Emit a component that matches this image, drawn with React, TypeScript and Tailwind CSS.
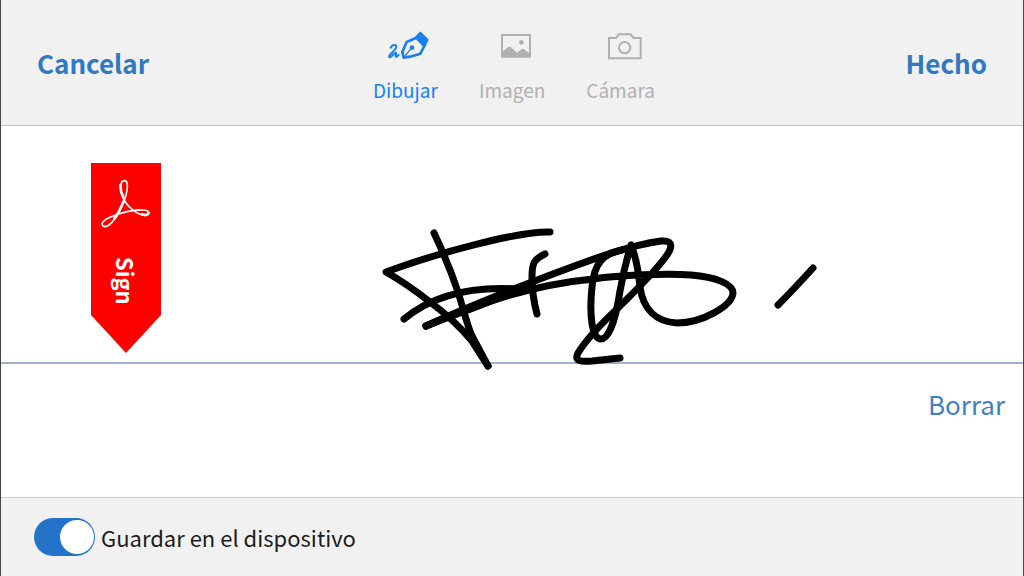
import { useState } from "react";
import clsx from "clsx";

function PenIcon() {
  return (
    <svg viewBox="84 30 126 90" className="h-[30px] w-[42px]" fill="none" stroke="currentColor" strokeLinejoin="round" strokeLinecap="round">
      <path strokeWidth="8" d="M131 110 L127 93 L140 63 L169 50 L193 75 L181 98 L150 107 Z" />
      <path fill="currentColor" strokeWidth="4" d="M168 47 L181 34 L204 56 L194 77 Z" />
      <path strokeWidth="4" d="M131 110 L153 83" />
      <circle cx="156" cy="80" r="7" fill="currentColor" stroke="none" />
      <path strokeWidth="6" d="M92 80 C98 69 112 69 108 81 C104 92 87 98 87 108 C93 112 103 94 108 95 C111 97 103 109 110 107 L116 102" />
    </svg>
  );
}

function ImageIcon() {
  return (
    <svg viewBox="420 36 96 84" className="h-[28px] w-[32px]" fill="currentColor">
      <path fillRule="evenodd" d="M423 42 H513 V113 H423 Z M429 48 V94 L446 80 Q449 78 452 81 L471 98 L486 87 Q489 85 492 88 L507 99 V48 Z" />
      <circle cx="484" cy="67" r="7" />
    </svg>
  );
}

function CameraIcon() {
  return (
    <svg viewBox="744 33 108 87" className="h-[29px] w-[36px]" fill="none" stroke="currentColor" strokeWidth="6">
      <path d="M750 51 H771 L780 40 H815 L824 51 H845 V112 H750 Z" />
      <circle cx="797" cy="80" r="17" />
    </svg>
  );
}

function AcrobatMark() {
  return (
    <svg viewBox="60 85 156 150" className="h-[50px] w-[52px]" fill="none" stroke="white" strokeLinejoin="round">
      <path
        strokeWidth="5"
        d="M133 90 C120 90 118 116 130 143 C143 170 174 194 195 194 C210 193 210 178 190 178 C164 176 120 186 90 200 C70 209 62 218 69 226 C84 235 108 205 122 175 C135 147 143 120 142 105 C142 96 139 90 133 90 Z"
      />
      <path strokeWidth="8" strokeLinecap="round" d="M103 204 C114 190 122 174 130 153 M121 104 C121 116 124 128 130 140 M186 191 C196 195 205 192 206 186" />
    </svg>
  );
}

function Signature() {
  return (
    <svg
      viewBox="380 220 440 150"
      role="img"
      aria-label="Firma"
      className="h-[150px] w-[440px] shrink-0"
      fill="none"
      stroke="black"
      strokeWidth="7"
      strokeLinecap="round"
      strokeLinejoin="round"
    >
      <path d="M434 233 C444 254 452 274 458 292 C464 311 467 325 472 336 L488 366" />
      <path d="M550 232 C520 231 440 252 386 272 C402 281 416 291 430 302 C445 313 461 328 472 341 L488 366" />
      <path d="M404 319 C432 296 470 286 517 289 C500 300 470 308 426 326" />
      <path d="M426 326 C465 308 500 294 545 277 C590 260 630 245 661 241 C674 240 673 248 664 259 C652 275 635 291 617 309 C601 324 586 340 578 353 C574 361 580 362 592 361 L620 358" />
      <path d="M426 326 C480 302 540 284 593 279 C620 275 667 273 691 275 C716 277 733 284 733 293 C732 306 702 323 677 323 C656 322 643 309 640 287 C638 267 634 252 631 245 C627 258 623 274 620 291 C616 318 609 339 601 339 C592 339 589 315 592 287 C594 264 603 253 622 250" />
      <path d="M545 254 C534 259 532 263 532 277 C532 293 534 303 537 314" />
      <path d="M813 268 C803 279 791 292 778 305" />
    </svg>
  );
}

const modes = [
  { id: "draw", label: "Dibujar", icon: PenIcon },
  { id: "image", label: "Imagen", icon: ImageIcon },
  { id: "camera", label: "Cámara", icon: CameraIcon },
];

export default function App() {
  const [mode, setMode] = useState("draw");
  const [save, setSave] = useState(true);

  return (
    <div className="flex min-h-screen flex-col border-x border-[#444] bg-white font-['Noto_Sans_CJK_SC','Noto_Sans',sans-serif]">
      <header className="grid grid-cols-[1fr_auto_1fr] items-center border-b border-[#c4c4c4] bg-[#f1f1f1] px-9">
        <button type="button" className="justify-self-start text-[26px] leading-8 font-bold text-[#2f78c4]">
          Cancelar
        </button>
        <div role="tablist" className="flex gap-[41px] pt-[30px] pb-[19px] pl-1">
          {modes.map(({ id, label, icon: Icon }) => (
            <button
              key={id}
              type="button"
              role="tab"
              aria-selected={mode === id}
              onClick={() => setMode(id)}
              className={clsx(
                "flex flex-col items-center gap-3 text-[19px] leading-8",
                mode === id ? "text-[#1a7ff0]" : "text-[#b0b0b0]"
              )}
            >
              <span className="flex h-8 items-center pl-2">
                <Icon />
              </span>
              {label}
            </button>
          ))}
        </div>
        <button type="button" className="justify-self-end text-[26px] leading-8 font-bold text-[#2f78c4]">
          Hecho
        </button>
      </header>

      <main className="flex flex-1 flex-col">
        <section className="flex h-[238px] items-end border-b-2 border-[#9bb2c8] pl-[90px]">
          <div className="mb-[9px] flex h-[190px] w-[70px] shrink-0 flex-col items-center bg-[#fb0200] pt-4 [clip-path:polygon(0_0,100%_0,100%_80%,50%_100%,0_80%)]">
            <AcrobatMark />
            <span className="mt-7 text-[22px] leading-8 font-bold text-white [writing-mode:vertical-rl]">Sign</span>
          </div>
          <div className="-mb-2 ml-[219px]">
            <Signature />
          </div>
        </section>
        <div className="flex justify-end px-[18px] py-5">
          <button type="button" className="text-[26px] leading-10 text-[#3f80c6]">
            Borrar
          </button>
        </div>
      </main>

      <footer className="border-t border-[#cfcfcf] bg-[#f1f1f1] px-[33px] py-5">
        <label className="flex items-center gap-1.5 text-[22px] leading-9 text-[#1c1c1c]">
          <input
            type="checkbox"
            role="switch"
            checked={save}
            onChange={(e) => setSave(e.target.checked)}
            className="flex h-[38px] w-[61px] shrink-0 appearance-none items-center rounded-full bg-[#a5a5a5] px-px before:size-[34px] before:rounded-full before:bg-white checked:justify-end checked:bg-[#2374c9]"
          />
          Guardar en el dispositivo
        </label>
      </footer>
    </div>
  );
}
